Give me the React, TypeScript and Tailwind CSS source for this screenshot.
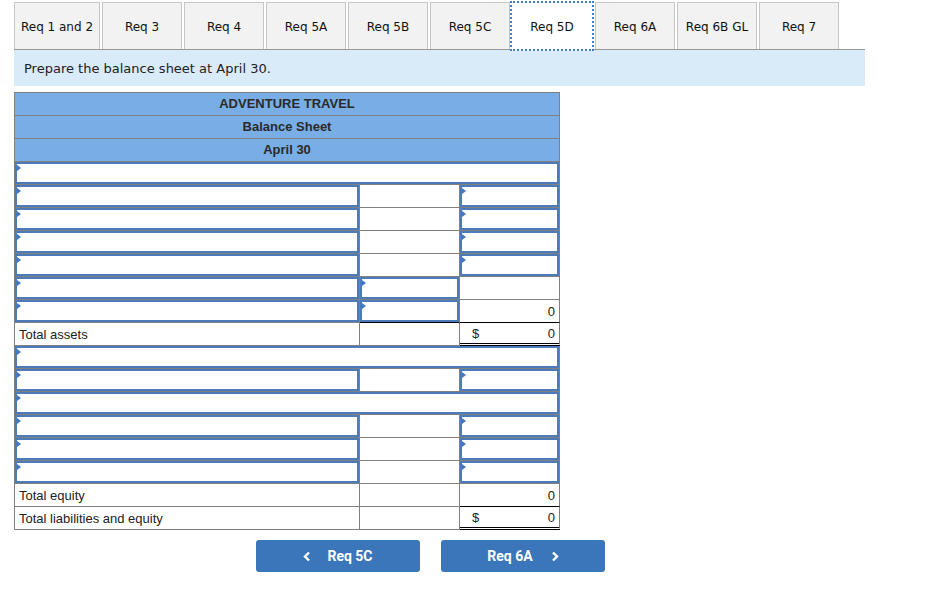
import React from "react";

type RowKind =
  | { t: "full" }
  | { t: "ac" }
  | { t: "ab"; value?: string; line?: boolean }
  | { t: "total"; label: string; dollar?: boolean; value: string; bottom: "single" | "double" };

const rows: RowKind[] = [
  { t: "full" },
  { t: "ac" },
  { t: "ac" },
  { t: "ac" },
  { t: "ac" },
  { t: "ab" },
  { t: "ab", value: "0", line: true },
  { t: "total", label: "Total assets", dollar: true, value: "0", bottom: "double" },
  { t: "full" },
  { t: "ac" },
  { t: "full" },
  { t: "ac" },
  { t: "ac" },
  { t: "ac" },
  { t: "total", label: "Total equity", value: "0", bottom: "single" },
  { t: "total", label: "Total liabilities and equity", dollar: true, value: "0", bottom: "double" },
];

const tabs = ["Req 1 and 2", "Req 3", "Req 4", "Req 5A", "Req 5B", "Req 5C", "Req 5D", "Req 6A", "Req 6B GL", "Req 7"];

function InputBox() {
  return (
    <div className="relative h-full w-full border-2 border-[#4b7bb8] bg-white">
      <div className="absolute left-0 top-[1px] h-0 w-0 border-y-[3px] border-l-[4px] border-y-transparent border-l-[#3d78c2]" />
    </div>
  );
}

const cellBase = "h-full border-r border-b border-[#808080] shrink-0";

function Row({ r }: { r: RowKind }) {
  if (r.t === "full") {
    return (
      <div className="flex h-[23px]">
        <div className={`${cellBase} w-[545px]`}>
          <InputBox />
        </div>
      </div>
    );
  }
  if (r.t === "ac") {
    return (
      <div className="flex h-[23px]">
        <div className={`${cellBase} w-[345px]`}>
          <InputBox />
        </div>
        <div className={`${cellBase} w-[100px]`} />
        <div className={`${cellBase} w-[100px]`}>
          <InputBox />
        </div>
      </div>
    );
  }
  if (r.t === "ab") {
    return (
      <div className="flex h-[23px]">
        <div className={`${cellBase} w-[345px]`}>
          <InputBox />
        </div>
        <div className={`h-full shrink-0 border-r border-[#808080] w-[100px] border-b ${r.line ? "border-b-black" : ""}`}>
          <InputBox />
        </div>
        <div
          className={`h-full shrink-0 border-r border-[#808080] w-[100px] border-b ${r.line ? "border-b-black" : ""} flex items-center justify-end pr-[4px] pt-[2px] text-[13px] text-[#222]`}
        >
          {r.value}
        </div>
      </div>
    );
  }
  return (
    <div className="flex h-[23px]">
      <div className={`${cellBase} w-[345px] flex items-center pl-[4px] pt-[2px] text-[13px] text-[#222]`}>{r.label}</div>
      <div className={`${cellBase} w-[100px]`} />
      <div
        className={`h-full shrink-0 border-r border-[#808080] w-[100px] flex items-center justify-between pl-[12px] pr-[4px] pt-[2px] text-[13px] text-[#222] ${
          r.bottom === "double" ? "border-b-[3px] border-b-black [border-bottom-style:double]" : "border-b border-b-black"
        }`}
      >
        <span>{r.dollar ? "$" : ""}</span>
        <span>{r.value}</span>
      </div>
    </div>
  );
}

export default function App() {
  return (
    <div className="min-h-[594px] w-[934px] bg-white" style={{ fontFamily: '"DejaVu Sans", Verdana, sans-serif' }}>
      <div className="ml-[14px] w-[851px]">
        {/* Tabs */}
        <div className="flex h-[50px] items-start border-b border-[#999999]">
          {tabs.map((t, i) => {
            const active = t === "Req 5D";
            if (active) {
              return (
                <div
                  key={t}
                  className="relative z-10 -ml-[2px] mr-[1px] mt-[1px] flex h-[50px] w-[84px] shrink-0 items-center justify-center border-2 border-dotted border-[#3f7dc7] bg-white pt-[2px] text-[12px] text-[#111]"
                >
                  {t}
                </div>
              );
            }
            return (
              <div
                key={t}
                className={`mt-[2px] mr-[2px] flex h-[47px] shrink-0 items-center justify-center border border-b-0 border-[#c6c6c6] bg-[#f2f2f2] pt-[2px] text-[12px] text-[#111] ${
                  i === 0 ? "w-[86px]" : "w-[80px]"
                }`}
              >
                {t}
              </div>
            );
          })}
        </div>
        {/* Instruction band */}
        <div className="flex h-[36px] items-center bg-[#d9eaf9] pl-[10px] pt-[2px] text-[13px] text-[#222]">
          Prepare the balance sheet at April 30.
        </div>

        {/* Table */}
        <div
          className="mt-[6px] w-[546px] border-l border-t border-[#808080]"
          style={{ fontFamily: '"Liberation Sans", Arial, sans-serif' }}
        >
          {["ADVENTURE TRAVEL", "Balance Sheet", "April 30"].map((h) => (
            <div key={h} className="flex h-[23px]">
              <div className="flex h-full w-[545px] items-center justify-center border-r border-b border-[#808080] bg-[#79ade5] text-[13px] font-bold text-[#2a2a2a]">
                {h}
              </div>
            </div>
          ))}
          {rows.map((r, i) => (
            <Row key={i} r={r} />
          ))}
        </div>

        {/* Buttons */}
        <div className="ml-[242px] mt-[10px] flex gap-[21px]" style={{ fontFamily: "Roboto, sans-serif" }}>
          <button className="flex h-[32px] w-[164px] items-center justify-center gap-[16px] rounded-[3px] bg-[#3b76ba] text-[14px] font-bold text-white">
            <svg width="8" height="11" viewBox="0 0 8 11">
              <polyline points="6,1.5 2,5.5 6,9.5" fill="none" stroke="white" strokeWidth="2.4" />
            </svg>
            <span>Req 5C</span>
          </button>
          <button className="flex h-[32px] w-[164px] items-center justify-center gap-[18px] rounded-[3px] bg-[#3b76ba] text-[14px] font-bold text-white">
            <span>Req 6A</span>
            <svg width="8" height="11" viewBox="0 0 8 11">
              <polyline points="2,1.5 6,5.5 2,9.5" fill="none" stroke="white" strokeWidth="2.4" />
            </svg>
          </button>
        </div>
      </div>
    </div>
  );
}
